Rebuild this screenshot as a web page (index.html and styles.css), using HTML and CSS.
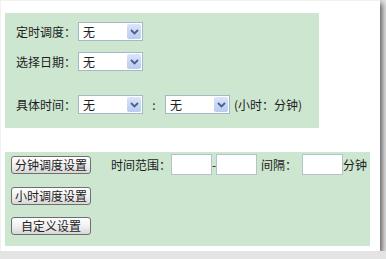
FILE: index.html
```html
<!DOCTYPE html>
<html lang="zh-CN">
<head>
  <meta charset="UTF-8">
  <title>调度设置</title>
  <link rel="stylesheet" href="styles.css">
</head>
<body>
  <div class="card">
    <div class="panel top">
      <div class="row r1">
        <label class="lbl">定时调度：</label>
        <span class="sel"><select><option>无</option></select><span class="arrow"><svg width="9" height="6" viewBox="0 0 9 6"><path d="M1 1 L4.5 4.5 L8 1" fill="none" stroke="#4a5f8c" stroke-width="1.8"/></svg></span></span>
      </div>
      <div class="row r2">
        <label class="lbl">选择日期：</label>
        <span class="sel"><select><option>无</option></select><span class="arrow"><svg width="9" height="6" viewBox="0 0 9 6"><path d="M1 1 L4.5 4.5 L8 1" fill="none" stroke="#4a5f8c" stroke-width="1.8"/></svg></span></span>
      </div>
      <div class="row r3">
        <label class="lbl">具体时间：</label>
        <span class="sel"><select><option>无</option></select><span class="arrow"><svg width="9" height="6" viewBox="0 0 9 6"><path d="M1 1 L4.5 4.5 L8 1" fill="none" stroke="#4a5f8c" stroke-width="1.8"/></svg></span></span>
        <span class="colon">:</span>
        <span class="sel"><select><option>无</option></select><span class="arrow"><svg width="9" height="6" viewBox="0 0 9 6"><path d="M1 1 L4.5 4.5 L8 1" fill="none" stroke="#4a5f8c" stroke-width="1.8"/></svg></span></span>
        <span class="hint">(小时：分钟)</span>
      </div>
    </div>

    <div class="panel bottom">
      <div class="row b1">
        <button type="button" class="btn">分钟调度设置</button>
        <span class="range-lbl">时间范围：</span>
        <input type="text" class="box">
        <span class="dash">-</span>
        <input type="text" class="box">
        <span class="gap-lbl">间隔：</span>
        <input type="text" class="box">
        <span>分钟</span>
      </div>
      <div class="row b2">
        <button type="button" class="btn">小时调度设置</button>
      </div>
      <div class="row b3">
        <button type="button" class="btn">自定义设置</button>
      </div>
    </div>
  </div>
</body>
</html>
```

FILE: styles.css
```css
body {
  margin: 0;
  background: #e4e4e4;
  font-family: "Noto Sans CJK SC", "DejaVu Sans", sans-serif;
  font-size: 12px;
  color: #1c1c1c;
}
.card {
  width: 380px;
  height: 251px;
  background: #fff;
  box-sizing: border-box;
  padding-top: 12px;
  border-top: 1px solid #f1f1f1;
  border-left: 1px solid #f1f1f1;
  box-shadow: 2px 3px 6px rgba(0,0,0,0.65);
}
.panel {
  background: #cce6d0;
  margin-left: 4px;
  box-sizing: border-box;
}
.top {
  width: 314px;
  height: 115px;
  padding: 9px 0 0 11px;
}
.bottom {
  width: 365px;
  height: 94px;
  margin-top: 24px;
  padding: 2px 0 0 6px;
}
.row {
  display: flex;
  align-items: center;
}
.r1, .r2 {
  height: 19px;
}
.r2 {
  margin-top: 11px;
}
.r3 {
  height: 19px;
  margin-top: 24px;
}
.lbl {
  width: 62px;
  white-space: nowrap;
}
.sel {
  position: relative;
  display: inline-block;
  width: 65px;
  height: 19px;
}
.sel select {
  appearance: none;
  -webkit-appearance: none;
  width: 100%;
  height: 100%;
  margin: 0;
  border: 1px solid #a5b8c8;
  background: #fff;
  font-family: inherit;
  font-size: 12px;
  color: #222;
  padding: 0 0 0 4px;
  border-radius: 0;
}
.arrow {
  position: absolute;
  right: 2px;
  top: 2px;
  width: 14px;
  height: 15px;
  background: linear-gradient(#dbe5fb, #b9cbf1);
  border-radius: 2px;
  display: flex;
  align-items: center;
  justify-content: center;
  pointer-events: none;
}
.colon {
  width: 22px;
  text-align: center;
}
.hint {
  margin-left: 4px;
}
.btn {
  height: 18px;
  width: 80px;
  padding: 0;
  font-family: inherit;
  font-size: 12px;
  line-height: 16px;
  color: #222;
  border: 1px solid #6f6f6f;
  border-radius: 3px;
  background: linear-gradient(#ffffff, #ededed 60%, #d6d6d6);
}
.b1 {
  height: 21px;
}
.b2 {
  margin-top: 12px;
}
.b3 {
  margin-top: 12px;
}
.range-lbl {
  margin-left: 20px;
}
.box {
  width: 41px;
  height: 21px;
  box-sizing: border-box;
  border: 1px solid #b5c2c9;
  background: #fff;
  margin: 0;
}
.dash {
  width: 4px;
  text-align: center;
}
.gap-lbl {
  margin-left: 4px;
  margin-right: 5px;
}
```
